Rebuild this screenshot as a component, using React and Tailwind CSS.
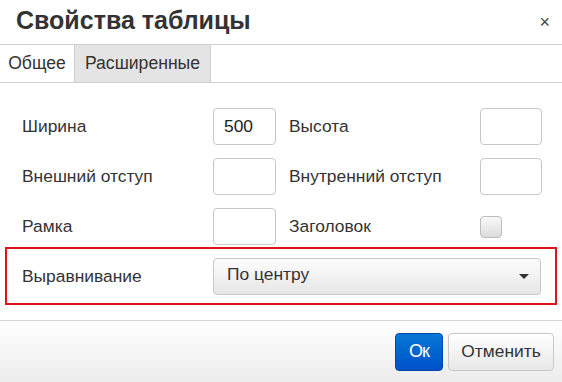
import React from 'react';

const font = { fontFamily: '"Liberation Sans", Arial, sans-serif' };

const TextBox = ({ value = '', width = 'w-[63px]' }) => (
  <div
    className={`${width} h-[37px] rounded-[4px] border border-[#c8c8c8] bg-white flex items-center px-[10px] text-[17.4px] text-[#222]`}
  >
    {value}
  </div>
);

const FieldRow = ({ left, leftValue, right, children }) => (
  <div className="flex items-center h-[37px] pl-[17px]">
    <div className="w-[191px] text-[17.4px] text-[#333]">{left}</div>
    <TextBox value={leftValue} />
    <div className="w-[191px] ml-[13px] text-[17.4px] text-[#333]">{right}</div>
    {children}
  </div>
);

export default function App() {
  return (
    <div className="w-[562px] h-[382px] bg-white flex flex-col overflow-hidden" style={font}>
      {/* header */}
      <div className="h-[45px] flex items-center justify-between pl-[16px] pr-[12px] border-b border-[#cfcfcf]">
        <h1 className="text-[25px] font-bold text-[#333] leading-none -mt-[3px]">Свойства таблицы</h1>
        <span className="text-[18px] text-[#444] leading-none -mt-[1px]">×</span>
      </div>

      {/* tabs */}
      <div className="h-[38px] flex border-b border-[#cfcfcf]">
        <div className="w-[74px] flex items-center justify-center text-[17.6px] text-[#333] bg-white">Общее</div>
        <div className="w-[137px] flex items-center justify-center text-[17.6px] text-[#333] bg-[#e4e4e4] border-l border-r border-[#cfcfcf]">
          Расширенные
        </div>
      </div>

      {/* body */}
      <div className="flex-1 px-[5px] pt-[25px]">
        <div className="flex flex-col gap-[13px]">
          <FieldRow left="Ширина" leftValue="500" right="Высота">
            <TextBox width="w-[62px]" />
          </FieldRow>
          <FieldRow left="Внешний отступ" right="Внутренний отступ">
            <TextBox width="w-[62px]" />
          </FieldRow>
          <FieldRow left="Рамка" right="Заголовок">
            <div className="w-[22px] h-[22px] rounded-[4px] border border-[#bdbdbd] bg-gradient-to-b from-[#fafafa] to-[#dcdcdc]" />
          </FieldRow>
        </div>

        <div className="mt-[2px] h-[58px] border-2 border-[#e0141e] flex items-center pl-[15px]">
          <div className="w-[191px] text-[17.4px] text-[#333]">Выравнивание</div>
          <div className="w-[328px] h-[37px] rounded-[4px] border border-[#c8c8c8] bg-gradient-to-b from-[#fdfdfd] to-[#e6e6e6] flex items-center justify-between pl-[13px] pr-[11px]">
            <span className="text-[17.4px] text-[#333] -mt-[4px]">По центру</span>
            <svg width="10" height="6" viewBox="0 0 10 6" className="mt-[1px]">
              <path d="M0 0 L10 0 L5 5 Z" fill="#333" />
            </svg>
          </div>
        </div>
      </div>

      {/* footer */}
      <div className="h-[62px] border-t border-[#d4d4d4] bg-gradient-to-b from-[#ffffff] to-[#ececec] flex items-center justify-end pr-[8px] gap-[5px]">
        <button className="w-[48px] h-[38px] rounded-[4px] border border-[#0447a8] bg-gradient-to-b from-[#0a78d6] to-[#0050c8] text-white text-[18px] tracking-[-1px]">
          Ок
        </button>
        <button className="w-[106px] h-[38px] rounded-[4px] border border-[#c8c8c8] bg-gradient-to-b from-[#ffffff] to-[#e8e8e8] text-[#333] text-[17.4px]">
          Отменить
        </button>
      </div>
    </div>
  );
}
